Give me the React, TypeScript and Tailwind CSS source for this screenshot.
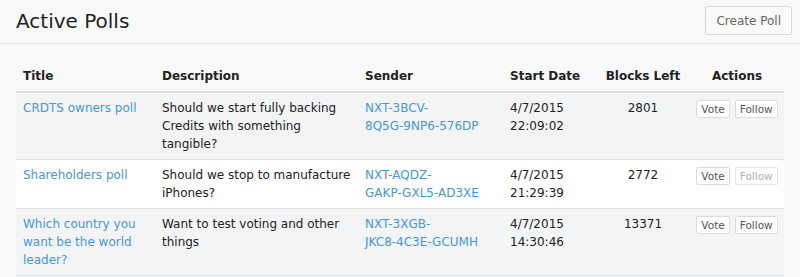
import React from "react";

type Poll = {
  title: string;
  description: string;
  sender: string;
  date: string;
  time: string;
  blocks: number;
  following?: boolean;
};

const polls: Poll[] = [
  {
    title: "CRDTS owners poll",
    description: "Should we start fully backing Credits with something tangible?",
    sender: "NXT-3BCV-8Q5G-9NP6-576DP",
    date: "4/7/2015",
    time: "22:09:02",
    blocks: 2801,
  },
  {
    title: "Shareholders poll",
    description: "Should we stop to manufacture iPhones?",
    sender: "NXT-AQDZ-GAKP-GXL5-AD3XE",
    date: "4/7/2015",
    time: "21:29:39",
    blocks: 2772,
    following: true,
  },
  {
    title: "Which country you want be the world leader?",
    description: "Want to test voting and other things",
    sender: "NXT-3XGB-JKC8-4C3E-GCUMH",
    date: "4/7/2015",
    time: "14:30:46",
    blocks: 13371,
  },
];

function splitSender(s: string) {
  // NXT-XXXX- / XXXX-XXXX-XXXXX
  const idx = s.indexOf("-", 4);
  return [s.slice(0, idx + 1), s.slice(idx + 1)];
}

export default function App() {
  return (
    <div className="min-h-screen bg-[#f9f9f9] text-[12px] leading-[18px] text-[#222]" style={{ fontFamily: '"DejaVu Sans", Verdana, sans-serif' }}>
      {/* Header */}
      <div className="flex items-center justify-between h-[44px] pl-[16px] pr-[8px] border-b border-[#e6e6e6]">
        <h1 className="text-[20px] leading-[24px] text-[#222] mt-[-2px]">Active Polls</h1>
        <button className="h-[29px] px-[10px] text-[12px] text-[#666] bg-[#fafafa] border border-[#d9d9d9] rounded-[2px] mb-[2px]">
          Create Poll
        </button>
      </div>

      {/* Table */}
      <div className="px-[16px] pt-[17px]">
        <table className="w-full table-fixed border-collapse">
          <colgroup>
            <col className="w-[139px]" />
            <col className="w-[203px]" />
            <col className="w-[145px]" />
            <col className="w-[93px]" />
            <col className="w-[94px]" />
            <col className="w-[94px]" />
          </colgroup>
          <thead>
            <tr className="border-b-2 border-[#dddddd] font-bold text-left">
              <th className="px-[7px] py-[6px] text-left">Title</th>
              <th className="px-[7px] py-[6px] text-left">Description</th>
              <th className="px-[7px] py-[6px] text-left">Sender</th>
              <th className="px-[7px] py-[6px] text-left">Start Date</th>
              <th className="px-[4px] py-[6px] text-center whitespace-nowrap">Blocks Left</th>
              <th className="px-[7px] py-[6px] text-center">Actions</th>
            </tr>
          </thead>
          <tbody>
            {polls.map((p, i) => {
              const [s1, s2] = splitSender(p.sender);
              return (
                <tr key={p.title} className={`border-b border-[#e2e2e2] align-top ${i % 2 === 0 ? "bg-[#f3f4f6]" : "bg-white"}`}>
                  <td className="px-[7px] py-[6px]">
                    <a href="#" className="text-[#4a98cf]">{p.title}</a>
                  </td>
                  <td className="px-[7px] py-[6px]">{p.description}</td>
                  <td className="px-[7px] py-[6px]">
                    <a href="#" className="text-[#4a98cf]">
                      {s1}
                      <br />
                      {s2}
                    </a>
                  </td>
                  <td className="px-[7px] py-[6px]">
                    {p.date}
                    <br />
                    {p.time}
                  </td>
                  <td className="px-[7px] py-[6px] text-center">{p.blocks}</td>
                  <td className="px-[6px] py-[7px]">
                    <div className="flex justify-center gap-[5px]">
                      <button className="h-[18px] px-[4px] text-[10.5px] leading-[16px] text-[#555] bg-white border border-[#dcdcdc] rounded-[2px]">
                        Vote
                      </button>
                      <button
                        className={`h-[18px] px-[4px] text-[10.5px] leading-[16px] bg-white border rounded-[2px] ${
                          p.following ? "text-[#b0b0b0] border-[#e6e6e6]" : "text-[#555] border-[#dcdcdc]"
                        }`}
                      >
                        Follow
                      </button>
                    </div>
                  </td>
                </tr>
              );
            })}
          </tbody>
        </table>
      </div>
    </div>
  );
}
